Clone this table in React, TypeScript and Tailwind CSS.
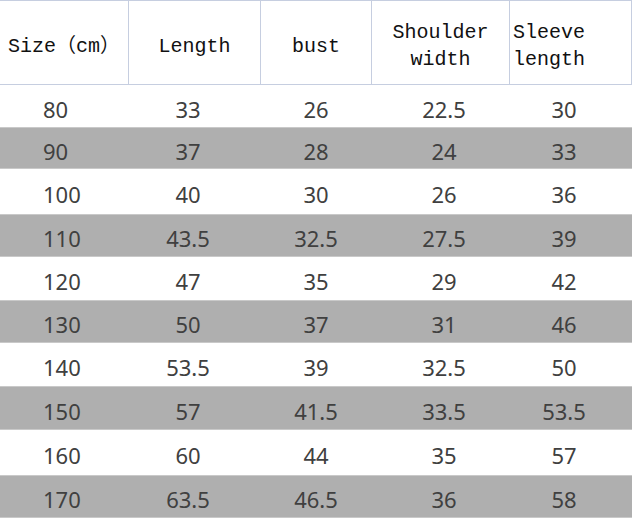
const rows = [
  ["80", "33", "26", "22.5", "30"],
  ["90", "37", "28", "24", "33"],
  ["100", "40", "30", "26", "36"],
  ["110", "43.5", "32.5", "27.5", "39"],
  ["120", "47", "35", "29", "42"],
  ["130", "50", "37", "31", "46"],
  ["140", "53.5", "39", "32.5", "50"],
  ["150", "57", "41.5", "33.5", "53.5"],
  ["160", "60", "44", "35", "57"],
  ["170", "63.5", "46.5", "36", "58"],
];

// measured row heights so the bands land where the photo has them
const heights = ["h-[42px]", "h-[42px]", "h-[45px]", "h-[43px]", "h-[43px]", "h-[43px]", "h-[43px]", "h-[44px]", "h-[45px]", "h-[43px]"];

const headCell = "flex h-[83px] items-center border-l border-[#c6cee0] pt-[7px] text-[20px] leading-[27px]";

export default function App() {
  return (
    <div className="h-[518px] w-[632px] overflow-hidden bg-white">
      <div
        className="grid grid-cols-[128px_132px_111px_138px_123px] border-y border-[#c6cee0] text-[#111]"
        style={{ fontFamily: '"Liberation Mono", "Noto Sans CJK SC", monospace' }}
      >
        <div className="flex h-[83px] items-center justify-center pt-[7px] text-[20px] leading-[27px]">Size（cm）</div>
        <div className={`${headCell} justify-center`}>Length</div>
        <div className={`${headCell} justify-center`}>bust</div>
        <div className={`${headCell} justify-center text-center`}>
          Shoulder
          <br />
          width
        </div>
        <div className={`${headCell} border-r pl-[3px]`}>
          Sleeve
          <br />
          length
        </div>
      </div>

      <div className="text-[22px] leading-none text-[#404040]" style={{ fontFamily: '"Noto Sans", sans-serif' }}>
        {rows.map((r, i) => (
          <div
            key={r[0]}
            className={`grid grid-cols-[128px_120px_136px_120px_1fr] items-center pt-[5px] ${heights[i]} ${
              i % 2 === 1 ? "border-y border-[#c9c9c9] bg-[#afafaf]" : "bg-white"
            }`}
          >
            <div className="pl-[43px]">{r[0]}</div>
            <div className="text-center">{r[1]}</div>
            <div className="text-center">{r[2]}</div>
            <div className="text-center">{r[3]}</div>
            <div className="pr-[8px] text-center">{r[4]}</div>
          </div>
        ))}
      </div>
    </div>
  );
}
